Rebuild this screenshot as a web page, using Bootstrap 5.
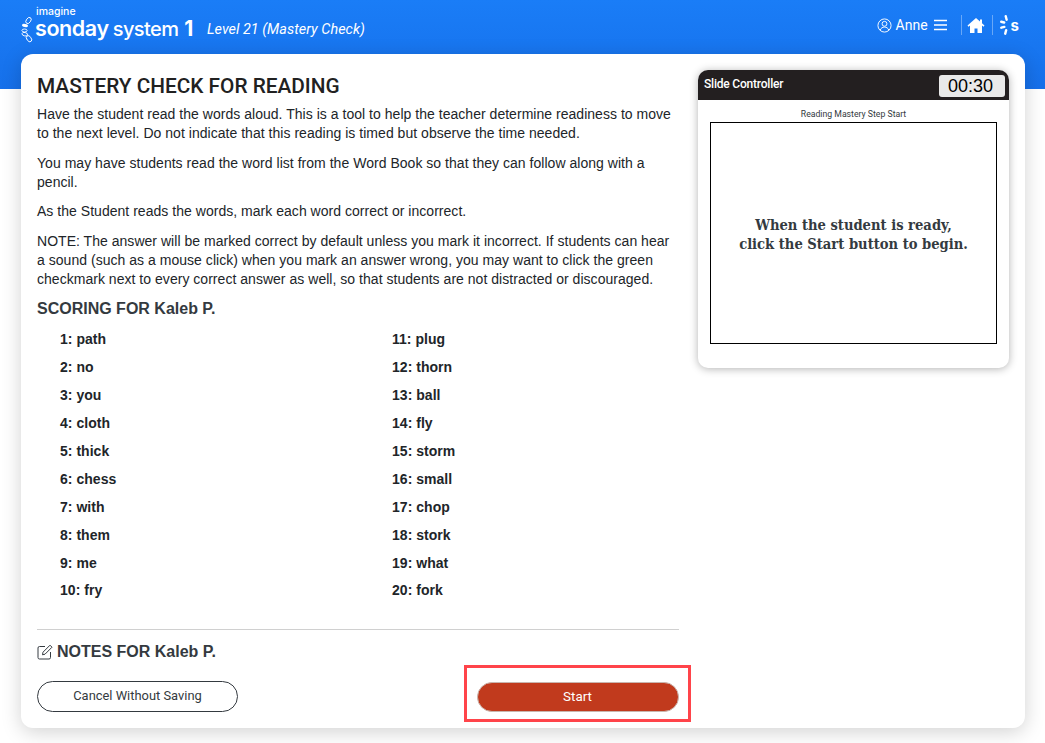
<!DOCTYPE html>
<html lang="en">
<head>
  <meta charset="UTF-8" />
  <meta name="viewport" content="width=device-width, initial-scale=1.0" />
  <title>Mastery Check</title>
  <link href="https://cdn.jsdelivr.net/npm/bootstrap@5.3.0/dist/css/bootstrap.min.css" rel="stylesheet" />
  <style>
    html, body { height: 743px; overflow: hidden; }
    body {
      background: #fff;
      color: #212529;
      font-family: "Liberation Sans", Arial, sans-serif;
      font-size: 14px;
      line-height: 19px;
      letter-spacing: 0.03px;
    }
    .top-band {
      height: 89px;
      margin-bottom: -35px;
      padding: 0 26px 35px 21px;
      background: linear-gradient(#1a7df7, #1670ea);
      color: #fff;
    }
    .logo-dots { width: 14px; height: 27px; margin-top: 16px; flex-shrink: 0; }
    .brand-wrap { width: 172px; line-height: 1; letter-spacing: 0; }
    .brand-small { font: 500 10.5px/10px Inter, sans-serif; padding-left: 1px; margin-top: 7px; }
    .brand-big { font: 600 21.5px/22px Inter, sans-serif; letter-spacing: -0.4px; white-space: nowrap; }
    .brand-big span { font-size: 20px; font-weight: 500; margin-left: -1px; letter-spacing: -0.6px; }
    .brand-big b { font-weight: 700; font-size: 21px; margin-left: 1px; }
    .level-text { font: italic 400 14.4px/1 Roboto, sans-serif; margin-top: 23px; }
    .user-text { font: 400 14px/1 Roboto, sans-serif; padding-bottom: 4px; letter-spacing: 0; }
    .user-name { margin: 0 6px 0 4px; }
    .divider-v { width: 1px; height: 20px; background: rgba(255,255,255,.35); margin: 0 5px 0 14px; }
    .divider-w { width: 1px; height: 20px; background: rgba(255,255,255,.35); margin: 0 7px; }
    .s-mark { font: 700 15px/1 Inter, sans-serif; margin-left: 2px; }
    .main-panel {
      height: 674px;
      margin: 0 20px 0 21px;
      padding: 16px;
      background: #fff;
      border-radius: 12px;
      box-shadow: 0 4px 20px rgba(0,0,0,.18);
    }
    .left-col { width: 642px; }
    .right-col { width: 311px; margin-left: 19px; }
    .title-main { font: 500 20.8px/32px Roboto, sans-serif; margin: 0 0 3px 0; color: #212121; letter-spacing: 0; }
    .left-col p { margin: 0 0 10.6px 0; }
    .sub-head { font: 700 16px/20px "Liberation Sans", sans-serif; color: #343a40; margin: 0; letter-spacing: 0; }
    .word-grid {
      display: grid;
      grid-template-columns: 332px 1fr;
      grid-auto-flow: column;
      grid-template-rows: repeat(10, 27.9px);
      padding: 7px 0 0 23px;
      font-weight: 700;
      color: #212529;
    }
    .word-grid div { line-height: 27.9px; }
    .rule-line { border-top: 1px solid #d0d0d0; margin-top: 24px; padding-top: 12px; }
    .foot-row { margin-top: 19px; }
    .btn-cancel {
      width: 201px;
      height: 31px;
      padding: 0;
      border: 1px solid #343a40;
      border-radius: 16px;
      background: #fff;
      color: #343a40;
      font: 400 12.9px/1 Roboto, sans-serif;
    }
    .mark-box {
      width: 227px;
      height: 57px;
      margin-top: -16px;
      margin-right: -12px;
      padding-top: 6px;
      border: 3px solid #ff444a;
      display: flex;
      align-items: center;
      justify-content: center;
    }
    .btn-start {
      width: 202px;
      height: 30px;
      padding: 0;
      border: 1px solid #c9b5ae;
      border-radius: 15px;
      background: #c13a1d;
      color: #fff;
      font: 400 13.4px/1 Roboto, sans-serif;
    }
    .slide-card {
      height: 298px;
      border-radius: 10px;
      background: #fff;
      box-shadow: 0 1px 8px rgba(0,0,0,.3);
      overflow: hidden;
    }
    .slide-head {
      height: 30px;
      background: #231f20;
      color: #fff;
      padding: 0 4px 0 6px;
      font: 500 12px/1 Roboto, sans-serif;
      letter-spacing: -0.2px;
    }
    .slide-title { margin-top: -2px; }
    .timer-box {
      width: 66px;
      height: 22px;
      margin-top: 1px;
      padding-right: 3px;
      border-radius: 3px;
      background: #e9e9e9;
      color: #000;
      font: 400 18px/22px "Liberation Sans", sans-serif;
      letter-spacing: 0;
      text-align: center;
    }
    .slide-label { font: 400 8.7px/12px Roboto, sans-serif; text-align: center; color: #343a40; margin-top: 8px; letter-spacing: 0; }
    .slide-box {
      width: 287px;
      height: 222px;
      margin: 2px auto 0 auto;
      padding-top: 2px;
      border: 1px solid #000;
      font: 700 14.6px/19px "DejaVu Serif Condensed", "DejaVu Serif", serif;
      font-stretch: condensed;
      color: #343a40;
      letter-spacing: 0;
      text-align: center;
    }
  </style>
</head>
<body>
  <div class="top-band d-flex justify-content-between">
    <div class="d-flex">
      <svg class="logo-dots" viewBox="0 0 14 27">
        <ellipse cx="7.500" cy="4.500" rx="2.200" ry="3.400" fill="none" stroke="#fff" stroke-width=".9" transform="rotate(35 7.500 4.500)"/>
        <ellipse cx="4" cy="9.500" rx="3" ry="1.600" fill="#fff" transform="rotate(10 4 9.500)"/>
        <ellipse cx="3.500" cy="14.500" rx="2.600" ry="1.500" fill="none" stroke="#fff" stroke-width=".9"/>
        <ellipse cx="3.800" cy="18.200" rx="2.800" ry="1.700" fill="none" stroke="#fff" stroke-width=".9" transform="rotate(15 3.800 18.200)"/>
        <ellipse cx="8" cy="22.700" rx="2.200" ry="3.400" fill="none" stroke="#fff" stroke-width=".9" transform="rotate(-35 8 22.700)"/>
      </svg>
      <div class="brand-wrap">
        <div class="brand-small">imagine</div>
        <div class="brand-big">sonday <span>system</span> <b>1</b></div>
      </div>
      <div class="level-text">Level 21 (Mastery Check)</div>
    </div>
    <div class="d-flex align-items-center user-text">
      <svg width="15" height="15" viewBox="0 0 16 16" fill="none" stroke="#fff" stroke-width="1"><circle cx="8" cy="8" r="7"/><circle cx="8" cy="6.200" r="2.600"/><path d="M3.400 13c.8-2.300 2.500-3.300 4.600-3.300s3.800 1 4.600 3.300"/></svg>
      <span class="user-name">Anne</span>
      <svg width="13" height="12" viewBox="0 0 13 12" stroke="#fff" stroke-width="1.500"><path d="M0 1.500h13M0 6h13M0 10.500h13"/></svg>
      <span class="divider-v"></span>
      <svg width="18" height="15" viewBox="0 0 17 15" fill="#fff"><path d="M8.500 0 0 7.500l1 1.200 1.500-1.300V15h4.500v-4.500h3V15H14.500V7.400L16 8.700l1-1.200-2.500-2.200V1.500h-2v2L8.500 0z"/></svg>
      <span class="divider-w"></span>
      <svg width="9" height="20" viewBox="0 0 9 20" fill="#fff"><rect x="5" y="0" width="2.400" height="6" rx="1.200" transform="rotate(-15 6 3)"/><rect x="0" y="6" width="5.500" height="2.400" rx="1.200" transform="rotate(15 3 7)"/><rect x="0" y="11" width="5.500" height="2.400" rx="1.200" transform="rotate(-15 3 12)"/><rect x="4.500" y="14" width="2.400" height="6" rx="1.200" transform="rotate(15 6 17)"/></svg>
      <span class="s-mark">s</span>
    </div>
  </div>

  <div class="main-panel d-flex">
    <div class="left-col">
      <h1 class="title-main">MASTERY CHECK FOR READING</h1>
      <p>Have the student read the words aloud. This is a tool to help the teacher determine readiness to move to the next level. Do not indicate that this reading is timed but observe the time needed.</p>
      <p>You may have students read the word list from the Word Book so that they can follow along with a pencil.</p>
      <p>As the Student reads the words, mark each word correct or incorrect.</p>
      <p>NOTE: The answer will be marked correct by default unless you mark it incorrect. If students can hear a sound (such as a mouse click) when you mark an answer wrong, you may want to click the green checkmark next to every correct answer as well, so that students are not distracted or discouraged.</p>
      <h2 class="sub-head">SCORING FOR Kaleb P.</h2>
      <div class="word-grid">
        <div>1: path</div><div>2: no</div><div>3: you</div><div>4: cloth</div><div>5: thick</div>
        <div>6: chess</div><div>7: with</div><div>8: them</div><div>9: me</div><div>10: fry</div>
        <div>11: plug</div><div>12: thorn</div><div>13: ball</div><div>14: fly</div><div>15: storm</div>
        <div>16: small</div><div>17: chop</div><div>18: stork</div><div>19: what</div><div>20: fork</div>
      </div>
      <div class="rule-line">
        <h2 class="sub-head d-flex align-items-center gap-1">
          <svg width="16" height="16" viewBox="0 0 16 16" fill="none" stroke="#343a40" stroke-width="1"><path d="M8 2.500H2.500A1.500 1.500 0 0 0 1 4v9.500A1.500 1.500 0 0 0 2.500 15H12a1.500 1.500 0 0 0 1.500-1.500V8"/><path d="M13 1.200 15 3.200 8 10.200 5.500 10.800 6 8.200z"/></svg>
          NOTES FOR Kaleb P.
        </h2>
      </div>
      <div class="foot-row d-flex justify-content-between">
        <button class="btn-cancel" type="button">Cancel Without Saving</button>
        <div class="mark-box">
          <button class="btn-start" type="button">Start</button>
        </div>
      </div>
    </div>
    <div class="right-col">
      <div class="slide-card">
        <div class="slide-head d-flex justify-content-between align-items-center">
          <span class="slide-title">Slide Controller</span>
          <div class="timer-box">00:30</div>
        </div>
        <div class="slide-label">Reading Mastery Step Start</div>
        <div class="slide-box d-flex align-items-center justify-content-center">
          <div>When the student is ready,<br />click the Start button to begin.</div>
        </div>
      </div>
    </div>
  </div>
  <script src="https://cdn.jsdelivr.net/npm/bootstrap@5.3.0/dist/js/bootstrap.bundle.min.js"></script>
</body>
</html>
